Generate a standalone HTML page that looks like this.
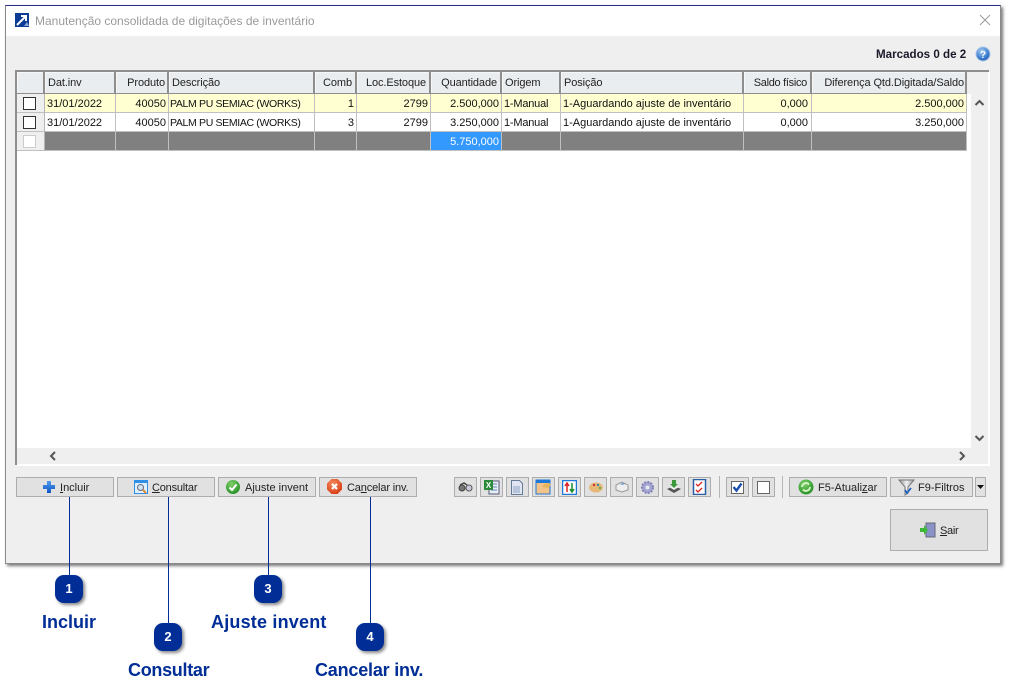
<!DOCTYPE html>
<html><head><meta charset="utf-8"><style>
html,body{margin:0;padding:0;background:#fff;width:1024px;height:698px;overflow:hidden}
body{position:relative;font-family:"Liberation Sans",sans-serif;font-size:11px;color:#111}
div,svg{position:absolute;box-sizing:border-box}
.t{white-space:nowrap;line-height:18px;height:18px}
.d{font-size:10.500px;letter-spacing:-.34px}
.r{text-align:right}
.h{background:#eaedf0;color:#222;height:21px;top:72px;border-right:2px solid #8e8e8e;line-height:23px;white-space:nowrap;box-shadow:inset 1px 1px 0 #f7f7f7;letter-spacing:-.1px}
.btn{background:#e1e1e1;border:1px solid #adadad;height:20px;top:477px;line-height:18px;color:#222;white-space:nowrap}
.sb{background:#e1e1e1;border:1px solid #adadad;height:20px;width:23px;top:477px}
.u{text-decoration:underline}
.n{width:28px;height:28px;border-radius:9px;background:#002d96;color:#fff;font-weight:bold;font-size:13px;text-align:center;line-height:28px;box-shadow:2px 2px 3px #888}
.l{color:#002d96;font-weight:bold;font-size:18px;white-space:nowrap;line-height:22px}
.v{width:1px;background:#002d96}
</style></head><body>
<svg width="0" height="0" style="left:0;top:0"><defs>
<radialGradient id="gb" cx=".4" cy=".3" r=".8"><stop offset="0" stop-color="#a9cdf2"/><stop offset=".6" stop-color="#3f7fd0"/><stop offset="1" stop-color="#1f57a8"/></radialGradient>
<radialGradient id="gg" cx=".4" cy=".3" r=".8"><stop offset="0" stop-color="#7fd06a"/><stop offset="1" stop-color="#1d8a20"/></radialGradient>
<radialGradient id="gr" cx=".4" cy=".3" r=".8"><stop offset="0" stop-color="#f58a5a"/><stop offset="1" stop-color="#d5350f"/></radialGradient>
<linearGradient id="gp" x1="0" y1="0" x2="0" y2="1"><stop offset="0" stop-color="#4f9bf0"/><stop offset="1" stop-color="#0f55c0"/></linearGradient>
<linearGradient id="gf" x1="0" y1="0" x2="1" y2="0"><stop offset="0" stop-color="#8e9298"/><stop offset=".5" stop-color="#f0f0f0"/><stop offset="1" stop-color="#9a9ea4"/></linearGradient>
</defs></svg>
<!-- window -->
<div style="left:5px;top:5px;width:996px;height:559px;background:#efefef;border:1px solid #8a8a8a;border-top:1px solid #2a2a8a;box-shadow:2px 2px 3px #777"></div>
<div style="left:6px;top:6px;width:994px;height:30px;background:#fff"></div>
<svg style="left:15px;top:13px" width="14" height="14" viewBox="0 0 14 14"><rect width="14" height="14" fill="#0d3a94"/><path d="M2 12L10 4M6 3h5v5" stroke="#fff" stroke-width="2" fill="none"/><path d="M9 13l3-4 2 4z" fill="#8fa8d8"/></svg>
<div class="t" style="left:35px;top:12px;font-size:12px;color:#9a9a9a">Manutenção consolidada de digitações de inventário</div>
<svg style="left:979px;top:14px" width="12" height="12"><path d="M1 1l10 10M11 1L1 11" stroke="#999" stroke-width="1"/></svg>
<div class="t" style="left:876px;top:46px;font-weight:bold;color:#1a1a2a;font-size:11.600px">Marcados 0 de 2</div>
<svg style="left:975px;top:46px" width="16" height="16"><circle cx="8" cy="8" r="7" fill="url(#gb)" stroke="#a9c6ea"/><text x="8" y="12" font-size="10" font-weight="bold" text-anchor="middle" fill="#fff" font-family="Liberation Sans">?</text></svg>

<!-- grid -->
<div style="left:15px;top:70px;width:974px;height:395px;background:#fff;border-top:2px solid #8e8e8e;border-left:2px solid #8e8e8e"></div>
<div style="left:989px;top:72px;width:1px;height:393px;background:#fff"></div>
<div style="left:17px;top:465px;width:973px;height:1px;background:#fff"></div>
<div style="left:967px;top:72px;width:21px;height:22px;background:#efefef"></div>
<div style="left:971px;top:94px;width:17px;height:354px;background:#efefef"></div>
<div style="left:17px;top:448px;width:971px;height:16px;background:#efefef"></div>
<div style="left:17px;top:72px;width:27px;height:79px;background:#efefef"></div>
<svg style="left:974px;top:99px" width="11" height="8"><path d="M1.500 6L5.500 2L9.500 6" stroke="#555" stroke-width="2" fill="none"/></svg>
<svg style="left:974px;top:434px" width="11" height="8"><path d="M1.500 2L5.500 6L9.500 2" stroke="#555" stroke-width="2" fill="none"/></svg>
<svg style="left:49px;top:451px" width="8" height="10"><path d="M6 1L2 5L6 9" stroke="#555" stroke-width="2" fill="none"/></svg>
<svg style="left:958px;top:451px" width="8" height="10"><path d="M2 1L6 5L2 9" stroke="#555" stroke-width="2" fill="none"/></svg>

<!-- header -->
<div class="h" style="left:17px;width:28px"></div>
<div class="h" style="left:45px;width:71px;padding-left:3px">Dat.inv</div>
<div class="h r" style="left:116px;width:53px;padding-right:2px">Produto</div>
<div class="h" style="left:169px;width:146px;padding-left:3px">Descrição</div>
<div class="h r" style="left:315px;width:42px;padding-right:3px">Comb</div>
<div class="h r" style="left:357px;width:74px;padding-right:3px">Loc.Estoque</div>
<div class="h r" style="left:431px;width:71px;padding-right:3px">Quantidade</div>
<div class="h" style="left:502px;width:59px;padding-left:3px">Origem</div>
<div class="h" style="left:561px;width:183px;padding-left:3px">Posição</div>
<div class="h r" style="left:744px;width:68px;padding-right:3px;letter-spacing:-.3px">Saldo físico</div>
<div class="h r" style="left:812px;width:155px;padding-right:1px">Diferença Qtd.Digitada/Saldo</div>
<div style="left:17px;top:93px;width:950px;height:1px;background:#8e8e8e"></div>

<!-- rows bg -->
<div style="left:45px;top:94px;width:922px;height:18px;background:#ffffd2"></div>
<div style="left:45px;top:132px;width:922px;height:18px;background:#808080"></div>
<div style="left:431px;top:132px;width:70px;height:18px;background:#3399ff"></div>
<div style="left:17px;top:112px;width:950px;height:1px;background:#c0c0c0"></div>
<div style="left:17px;top:131px;width:950px;height:1px;background:#c0c0c0"></div>
<div style="left:17px;top:150px;width:950px;height:1px;background:#c0c0c0"></div>
<!-- col lines -->
<div style="left:44px;top:94px;width:1px;height:57px;background:#b5b5b5"></div>
<div style="left:115px;top:94px;width:1px;height:57px;background:#c0c0c0"></div>
<div style="left:168px;top:94px;width:1px;height:57px;background:#c0c0c0"></div>
<div style="left:314px;top:94px;width:1px;height:57px;background:#c0c0c0"></div>
<div style="left:356px;top:94px;width:1px;height:57px;background:#c0c0c0"></div>
<div style="left:430px;top:94px;width:1px;height:57px;background:#c0c0c0"></div>
<div style="left:501px;top:94px;width:1px;height:57px;background:#c0c0c0"></div>
<div style="left:560px;top:94px;width:1px;height:57px;background:#c0c0c0"></div>
<div style="left:743px;top:94px;width:1px;height:57px;background:#c0c0c0"></div>
<div style="left:811px;top:94px;width:1px;height:57px;background:#c0c0c0"></div>
<div style="left:966px;top:94px;width:1px;height:57px;background:#c0c0c0"></div>
<!-- checkboxes -->
<div style="left:23px;top:97px;width:13px;height:13px;border:1px solid #333;background:#fff"></div>
<div style="left:23px;top:116px;width:13px;height:13px;border:1px solid #333;background:#fff"></div>
<div style="left:23px;top:135px;width:13px;height:13px;border:1px solid #ccc;background:#fff"></div>
<!-- row 1 -->
<div class="t" style="left:47px;top:95px">31/01/2022</div>
<div class="t r" style="left:116px;top:95px;width:50px">40050</div>
<div class="t d" style="left:170px;top:95px">PALM PU SEMIAC (WORKS)</div>
<div class="t r" style="left:315px;top:95px;width:39px">1</div>
<div class="t r" style="left:357px;top:95px;width:71px">2799</div>
<div class="t r" style="left:431px;top:95px;width:68px">2.500,000</div>
<div class="t" style="left:504px;top:95px;letter-spacing:-.2px">1-Manual</div>
<div class="t" style="left:563px;top:95px">1-Aguardando ajuste de inventário</div>
<div class="t r" style="left:744px;top:95px;width:64px">0,000</div>
<div class="t r" style="left:812px;top:95px;width:152px">2.500,000</div>
<!-- row 2 -->
<div class="t" style="left:47px;top:114px">31/01/2022</div>
<div class="t r" style="left:116px;top:114px;width:50px">40050</div>
<div class="t d" style="left:170px;top:114px">PALM PU SEMIAC (WORKS)</div>
<div class="t r" style="left:315px;top:114px;width:39px">3</div>
<div class="t r" style="left:357px;top:114px;width:71px">2799</div>
<div class="t r" style="left:431px;top:114px;width:68px">3.250,000</div>
<div class="t" style="left:504px;top:114px;letter-spacing:-.2px">1-Manual</div>
<div class="t" style="left:563px;top:114px">1-Aguardando ajuste de inventário</div>
<div class="t r" style="left:744px;top:114px;width:64px">0,000</div>
<div class="t r" style="left:812px;top:114px;width:152px">3.250,000</div>
<!-- row 3 -->
<div class="t r" style="left:431px;top:133px;width:68px;color:#fff">5.750,000</div>

<!-- left buttons -->
<div class="btn" style="left:16px;width:98px"></div>
<svg style="left:43px;top:481px" width="12" height="12"><path d="M4 0h4v4h4v4H8v4H4V8H0V4h4z" fill="url(#gp)"/></svg>
<div class="t" style="left:60px;top:479px;color:#222"><span class="u">I</span>ncluir</div>
<div class="btn" style="left:117px;width:98px"></div>
<svg style="left:134px;top:480px" width="14" height="14"><rect x=".5" y=".5" width="13" height="13" fill="#dff0ff" stroke="#2f8fe8"/><rect x="1" y="1" width="12" height="2" fill="#2f8fe8"/><circle cx="6.500" cy="7.500" r="3" fill="#cfe4f5" stroke="#667"/><path d="M9 10l3 3" stroke="#e08a30" stroke-width="2"/></svg>
<div class="t" style="left:152px;top:479px;color:#222;letter-spacing:-.2px"><span class="u">C</span>onsultar</div>
<div class="btn" style="left:218px;width:98px"></div>
<svg style="left:226px;top:480px" width="14" height="14"><circle cx="7" cy="7" r="7" fill="url(#gg)"/><path d="M3.500 7.500L6 10L10.500 4.500" stroke="#fff" stroke-width="2" fill="none"/></svg>
<div class="t" style="left:245px;top:479px;color:#222">A<span class="u">j</span>uste invent</div>
<div class="btn" style="left:319px;width:98px"></div>
<svg style="left:327px;top:479px" width="15" height="15"><path d="M4.500 0h6L15 4.500v6L10.500 15h-6L0 10.500v-6z" fill="url(#gr)"/><path d="M5 5l5 5M10 5l-5 5" stroke="#fff" stroke-width="2.200"/></svg>
<div class="t" style="left:347px;top:479px;color:#222;letter-spacing:-.15px">Ca<span class="u">n</span>celar inv.</div>

<!-- small icon buttons -->
<div class="sb" style="left:454px"></div>
<svg style="left:458px;top:482px" width="15" height="10"><circle cx="4" cy="6" r="3" fill="#777" stroke="#444"/><circle cx="11" cy="6" r="3" fill="#ccd" stroke="#555"/><path d="M2 3l4-2 3 2" stroke="#444" stroke-width="1.500" fill="none"/></svg>
<div class="sb" style="left:480px"></div>
<svg style="left:483px;top:479px" width="17" height="16"><rect x="6" y="2" width="10" height="13" fill="#e8eef5" stroke="#557"/><path d="M8 5h6M8 8h6M8 11h6" stroke="#6a86b8"/><rect x="1" y="1" width="9" height="10" fill="#2a8a3a"/><text x="5.500" y="9" font-size="8" font-weight="bold" fill="#fff" text-anchor="middle" font-family="Liberation Sans">X</text></svg>
<div class="sb" style="left:506px"></div>
<svg style="left:510px;top:480px" width="14" height="15"><path d="M1.500.5h8l3 3v11h-11z" fill="#dfe6f2" stroke="#667a9a"/><rect x="3" y="6" width="7" height="7" fill="#b6c4dc"/></svg>
<div class="sb" style="left:532px"></div>
<svg style="left:535px;top:479px" width="17" height="16"><rect x="1" y="1" width="14" height="14" fill="#f4c38a" stroke="#1e78d8"/><rect x="1" y="1" width="14" height="3" fill="#1e78d8"/><path d="M7 8q3-5 9-3l-2 4z" fill="#e8b45a"/></svg>
<div class="sb" style="left:558px"></div>
<svg style="left:562px;top:480px" width="15" height="15"><rect x=".5" y=".5" width="14" height="14" fill="#fff" stroke="#1e78d8" stroke-width="1.500"/><path d="M5 12V4M3 6l2-3 2 3" stroke="#d22" stroke-width="1.500" fill="none"/><path d="M10 3v8M8 9l2 3 2-3" stroke="#1a8a2a" stroke-width="1.500" fill="none"/></svg>
<div class="sb" style="left:584px"></div>
<svg style="left:589px;top:482px" width="14" height="11"><ellipse cx="7" cy="5.500" rx="7" ry="5" fill="#e8b878"/><circle cx="5" cy="3" r="1.200" fill="#c33"/><circle cx="9" cy="3" r="1.200" fill="#38a"/><circle cx="11" cy="6" r="1.200" fill="#5a5"/></svg>
<div class="sb" style="left:610px"></div>
<svg style="left:615px;top:481px" width="14" height="12"><path d="M1 4l6-3 6 3v5l-6 2-6-2z" fill="#eee" stroke="#999"/><path d="M5 3l3-1 2 1-3 1z" fill="#6a9ad0"/></svg>
<div class="sb" style="left:636px"></div>
<svg style="left:640px;top:480px" width="15" height="15"><circle cx="7.500" cy="7.500" r="5.500" fill="#a5a5d2" stroke="#8080b8" stroke-width="2" stroke-dasharray="2 1.200"/><circle cx="7.500" cy="7.500" r="2" fill="#e8e8f2"/></svg>
<div class="sb" style="left:662px"></div>
<svg style="left:666px;top:479px" width="16" height="16"><path d="M1 10l7-3 7 3-7 4z" fill="#555"/><path d="M3 8l5-2 5 2-5 3z" fill="#eee"/><path d="M6 1h4v4h2L8 9 4 5h2z" fill="#3a9a3a"/></svg>
<div class="sb" style="left:688px"></div>
<svg style="left:692px;top:479px" width="15" height="16"><rect x="1.500" y=".5" width="12" height="15" fill="#fff" stroke="#2a5fa8" stroke-width="1.500"/><path d="M4 5l2 2 4-4M4 11l2 2 4-4" stroke="#d22" stroke-width="1.300" fill="none"/></svg>
<div style="left:719px;top:476px;width:1px;height:22px;background:#b5b5b5"></div>
<div class="sb" style="left:726px"></div>
<svg style="left:731px;top:481px" width="13" height="13"><rect x=".5" y=".5" width="12" height="12" fill="#fff" stroke="#666"/><path d="M2.500 6L5.500 9.500L10.500 2.500" stroke="#1b4fb0" stroke-width="2.400" fill="none"/></svg>
<div class="sb" style="left:752px"></div>
<div style="left:757px;top:481px;width:13px;height:13px;background:#fff;border:1px solid #666"></div>
<div style="left:782px;top:476px;width:1px;height:22px;background:#b5b5b5"></div>

<!-- right buttons -->
<div class="btn" style="left:789px;width:98px"></div>
<svg style="left:798px;top:479px" width="16" height="16"><circle cx="8" cy="8" r="7.500" fill="url(#gg)"/><path d="M4 8a4 4 0 0 1 7-2.500M12 8a4 4 0 0 1-7 2.500" stroke="#d8f5c8" stroke-width="1.800" fill="none"/></svg>
<div class="t" style="left:818px;top:479px;color:#222">F5-Atuali<span class="u">z</span>ar</div>
<div class="btn" style="left:890px;width:83px"></div>
<svg style="left:898px;top:478px" width="17" height="18"><path d="M1 2h15L10 9v6l-3 2V9z" fill="url(#gf)" stroke="#777"/><path d="M7 12l2 3 4-5" stroke="#1b5fc0" stroke-width="1.800" fill="none"/></svg>
<div class="t" style="left:918px;top:479px;color:#222">F9-Filtros</div>
<div class="btn" style="left:975px;width:11px"></div>
<svg style="left:977px;top:485px" width="7" height="4"><path d="M0 0h7L3.500 4z" fill="#111"/></svg>
<div style="left:890px;top:509px;width:98px;height:42px;background:#e1e1e1;border:1px solid #adadad"></div>
<svg style="left:920px;top:522px" width="16" height="16"><rect x="6" y="1" width="9" height="14" fill="#8a92c8" stroke="#667"/><path d="M0 6h4V3l4 5-4 5v-3H0z" fill="#3fb83a"/></svg>
<div class="t" style="left:940px;top:522px;color:#222;letter-spacing:-.3px"><span class="u">S</span>air</div>

<!-- callouts -->
<div class="v" style="left:69px;top:497px;height:80px"></div>
<div class="v" style="left:168px;top:497px;height:128px"></div>
<div class="v" style="left:268px;top:497px;height:80px"></div>
<div class="v" style="left:370px;top:497px;height:128px"></div>
<div class="n" style="left:55px;top:575px">1</div>
<div class="n" style="left:154px;top:623px">2</div>
<div class="n" style="left:254px;top:575px">3</div>
<div class="n" style="left:356px;top:623px">4</div>
<div class="l" style="left:42px;top:611px">Incluir</div>
<div class="l" style="left:128px;top:659px;letter-spacing:-.3px">Consultar</div>
<div class="l" style="left:211px;top:611px;letter-spacing:.2px">Ajuste invent</div>
<div class="l" style="left:315px;top:659px;letter-spacing:-.2px">Cancelar inv.</div>
</body></html>
